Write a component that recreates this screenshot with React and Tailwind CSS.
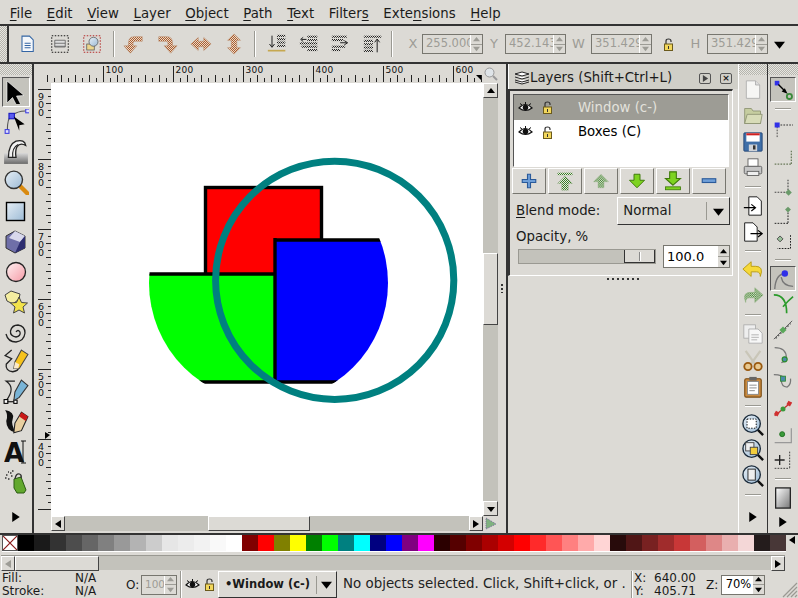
import React from "react";

const palette = ["#000000","#1a1a1a","#333333","#4d4d4d","#666666","#808080","#999999","#b3b3b3","#cccccc","#e6e6e6","#ececec","#f2f2f2","#f9f9f9","#ffffff","#800000","#ff0000","#808000","#ffff00","#008000","#00ff00","#008080","#00ffff","#000080","#0000ff","#800080","#ff00ff","#2b0000","#550000","#800000","#aa0000","#d40000","#ff0000","#ff2a2a","#ff5555","#ff8080","#ffaaaa","#ffd5d5","#280b0b","#501616","#782121","#a02c2c","#c83737","#d35f5f","#de8787","#e9afaf","#f4d7d7","#241c1c","#483737"];

const handleBg = "bg-[repeating-conic-gradient(#b5b4ad_0_25%,#e6e5e0_0_50%)] bg-[length:2px_2px]";

function S({ size = 24, children }) {
  return <svg width={size} height={size} viewBox="0 0 24 24" className="block">{children}</svg>;
}

function Defs() {
  return (
    <svg width="0" height="0" className="block h-0 w-0">
      <defs>
        <pattern id="hatchO" width="2.18" height="2.18" patternUnits="userSpaceOnUse">
          <rect width="2.18" height="2.18" fill="#ecdccc" />
          <rect width="1.09" height="1.09" fill="#a85a2c" />
          <rect x="1.09" y="1.09" width="1.09" height="1.09" fill="#a85a2c" />
        </pattern>
        <pattern id="hatchK" width="2.4" height="2.4" patternUnits="userSpaceOnUse">
          <rect width="1.2" height="1.2" fill="#222" />
          <rect x="1.2" y="1.2" width="1.2" height="1.2" fill="#222" />
        </pattern>
        <pattern id="hatchG" width="2.4" height="2.4" patternUnits="userSpaceOnUse">
          <rect width="2.4" height="2.4" fill="#e4ecdc" />
          <rect width="1.2" height="1.2" fill="#3a7a28" />
          <rect x="1.2" y="1.2" width="1.2" height="1.2" fill="#3a7a28" />
        </pattern>
        <linearGradient id="gBlue" x1="0" y1="0" x2="1" y2="1"><stop offset="0" stopColor="#e6eef5" /><stop offset="1" stopColor="#9dbbd6" /></linearGradient>
        <linearGradient id="gPink" x1="0" y1="0" x2="1" y2="1"><stop offset="0" stopColor="#fff2f2" /><stop offset="1" stopColor="#f59aa6" /></linearGradient>
        <linearGradient id="gGrey" x1="0" y1="0" x2="0" y2="1"><stop offset="0" stopColor="#d8d8d8" /><stop offset="1" stopColor="#6a6a6a" /></linearGradient>
        <linearGradient id="gWhite" x1="0" y1="0" x2="1" y2="1"><stop offset="0" stopColor="#ffffff" /><stop offset="1" stopColor="#777777" /></linearGradient>
      </defs>
    </svg>
  );
}

// little triangle used in scrollbars, spin boxes and overflow buttons
function Tri({ dir = "right", size = 8, color = "#000" }) {
  const pts = { right: "1,0 7,4 1,8", left: "7,0 1,4 7,8", up: "0,6 4,1 8,6", down: "0,2 8,2 4,7" }[dir];
  return <svg width={size} height={size} viewBox="0 0 8 8" className="block"><polygon points={pts} fill={color} /></svg>;
}

const Eye = () => (
  <svg width="15" height="12" viewBox="0 0 15 12" className="block">
    <path d="M1 6 Q7.5 -1 14 6 Q7.5 11 1 6Z" fill="#fff" stroke="#111" strokeWidth="1.2" />
    <circle cx="7.5" cy="5.5" r="2.8" fill="#111" />
    <path d="M2 1.5 L4 3 M7.5 0 V2 M13 1.5 L11 3" stroke="#111" />
  </svg>
);
const Lock = () => (
  <svg width="11" height="13" viewBox="0 0 11 13" className="block">
    <path d="M3 6 V3 Q3 1 5.5 1 Q8 1 8 3 V4" fill="none" stroke="#333" strokeWidth="1.2" />
    <rect x="1.5" y="6" width="8" height="6.5" fill="#f2d75c" stroke="#6b5a1c" />
    <rect x="5" y="8" width="1" height="3" fill="#333" />
  </svg>
);

// left tool box
const tools = [
  <S key="sel"><polygon points="3,1 3,23 8.5,17.5 13,26 16.5,24 12.5,16 20,15.5" fill="#000" stroke="#fff" strokeWidth="0.6" /></S>,
  <S key="node" size={26}><path d="M4 20 Q4 8 8 6 Q15 1 23 2" fill="none" stroke="#555" /><rect x="5.5" y="4" width="5" height="5" fill="#5a5af0" stroke="#1818c0" /><rect x="21" y="0" width="3.5" height="3.5" fill="#e0e0ff" stroke="#4040e0" /><rect x="2" y="19" width="3.5" height="3.5" fill="#e0e0ff" stroke="#4040e0" /><polygon points="10,7 20,14 15,15 15,20" fill="#000" /></S>,
  <S key="tweak" size={26}><rect x="1" y="13" width="22" height="10" fill="url(#gGrey)" /><path d="M5 17 Q5 5 12 2 Q20 0 21 6 Q16 3 13 7 Q11 11 12 17Z" fill="#f2f2f2" stroke="#222" strokeWidth="1.2" /><path d="M9 17 Q8 8 14 5" fill="none" stroke="#222" /></S>,
  <S key="zoom" size={26}><path d="M15 15 L23 23" stroke="#d98a10" strokeWidth="4" strokeLinecap="round" /><circle cx="10" cy="10" r="8" fill="url(#gBlue)" stroke="#333" strokeWidth="1.3" /></S>,
  <S key="rect"><rect x="2.5" y="2.5" width="18" height="18" fill="url(#gBlue)" stroke="#000" strokeWidth="1.4" /></S>,
  <S key="box"><polygon points="11,1 21,6 21,18 11,23 2,18 2,6" fill="#6f6fa8" stroke="#333" /><polygon points="11,1 21,6 16,12 5,8" fill="#d8d8ec" /><polygon points="16,12 21,6 21,18 11,23" fill="#2e2e70" /></S>,
  <S key="ell"><circle cx="12" cy="12" r="9.5" fill="url(#gPink)" stroke="#222" strokeWidth="1.3" /></S>,
  <S key="star"><polygon points="7,1 16,4 15,9 9,14 3,11 1,5" fill="#f4eda0" stroke="#444" /><polygon points="15,7 17.5,12.5 23.5,13 19,17 20.5,23 15,20 9.5,23 11,17 6.5,13 12.5,12.5" fill="#f2e24a" stroke="#444" /></S>,
  <S key="spiral"><path d="M12 12 Q14 9 16 12 Q17 16 12 17 Q6 16 6.500 11 Q8 5 14 5 Q21 6 21 13 Q20 21 12 22 Q4 22 2 14" fill="none" stroke="#222" strokeWidth="1.3" /></S>,
  <S key="pencil" size={26}><path d="M8 1 L2 6 L8 9 L3 14 Q2 20 9 21 Q15 20 14 17" fill="none" stroke="#222" strokeWidth="1.2" /><polygon points="17,1 23,5 15,18 10,18 11,12" fill="#f5c21c" stroke="#444" /><polygon points="11,12 15,14 14,18 10,18" fill="#fbe9c8" /></S>,
  <S key="pen" size={26}><path d="M3 20 Q12 8 3 2 H11" fill="none" stroke="#222" strokeWidth="1.1" /><rect x="1" y="19" width="3.500" height="3.500" fill="#fff" stroke="#000" /><rect x="10" y="19.500" width="3" height="3" fill="#fff" stroke="#000" /><path d="M4 21 H10" stroke="#000" /><polygon points="17,1 23,6 15,17 10,20 11,12" fill="#79b4d6" stroke="#333" /></S>,
  <S key="cal" size={26}><path d="M2 1 Q11 3 9 9 Q7 14 12 22 Q3 20 3 11 Q5 6 2 1Z" fill="#111" /><polygon points="17,3 23,7 17,20 10,22 11,13" fill="#e8cfa0" stroke="#222" /><polygon points="17,3 23,7 21,11 15,7" fill="#c81818" /></S>,
  <S key="text"><text x="0" y="22" fontFamily="DejaVu Sans" fontWeight="700" fontSize="26" fill="#111">A</text><path d="M19 1 V23 M17 1 H22 M17 23 H22" stroke="#111" fill="none" /></S>,
  <S key="spray"><polygon points="10,9 17,7 22,20 20,23 13,23 10,18" fill="#62a82e" stroke="#2a5a12" /><path d="M11 9 Q12 3 15.500 4 Q18 5 17 8" fill="none" stroke="#333" strokeWidth="1.3" /><path d="M6 3h1.500M2 5h1.500M7 6h1.500M1 8h1.500M4 9h1.500M8 1h1.500M4 2h1" stroke="#333" strokeWidth="1.500" /></S>,
];

// top command bar
const Page = () => (
  <S size={18}><path d="M4 1.500 H14 L19 6.500 V22 H4Z" fill="#f4f7fb" stroke="#3465a4" strokeWidth="1.4" /><path d="M7.500 11 H15.500 M7.500 14 H15.500 M7.500 17 H15.500" stroke="#3465a4" strokeWidth="1.5" /></S>
);
const SelAll = () => (
  <S size={18}><rect x="1" y="1" width="22" height="22" fill="none" stroke="#000" strokeWidth="1.2" strokeDasharray="2 2" /><path d="M5 7 H19 V16 H5Z M5 11 H19 M5 15 H19" fill="#ddd" stroke="#555" /></S>
);
const SelSame = () => (
  <S size={18}><rect x="1" y="1" width="22" height="22" fill="none" stroke="#b01818" strokeWidth="1.200" strokeDasharray="2 2" /><rect x="5" y="12" width="10" height="8" fill="#ecd58c" stroke="#555" /><circle cx="14" cy="9" r="6" fill="url(#gBlue)" stroke="#555" /></S>
);
const RotL = () => (
  <S size={22}><path d="M21 4 H12 Q6 4 6 11 V14 H1 L8 22 L15 14 H11 V11 Q11 9 13 9 H21Z" fill="url(#hatchO)" stroke="#b98a68" strokeWidth="0.6" /></S>
);
const RotR = () => (
  <S size={22}><path d="M3 4 H12 Q18 4 18 11 V14 H23 L16 22 L9 14 H13 V11 Q13 9 11 9 H3Z" fill="url(#hatchO)" stroke="#b98a68" strokeWidth="0.6" /></S>
);
const FlipH = () => (
  <S size={22}><path d="M1 12 L9 5 V9 H15 V5 L23 12 L15 19 V15 H9 V19Z" fill="url(#hatchO)" stroke="#b98a68" strokeWidth="0.6" /></S>
);
const FlipV = () => (
  <S size={22}><path d="M12 1 L19 8 H15 V16 H19 L12 23 L5 16 H9 V8 H5Z" fill="url(#hatchO)" stroke="#b98a68" strokeWidth="0.6" /></S>
);
const Bars = ({ rows }) => rows.map((r, i) => <rect key={i} x={r[0]} y={r[1]} width={r[2]} height="2.500" fill="url(#hatchK)" />);
const Raise = () => (
  <S size={20}><Bars rows={[[12,1,10],[12,5,10],[12,9,10],[12,13,10]]} /><path d="M6 2 V15 M3 12 L6 16 L9 12" fill="none" stroke="#222" strokeWidth="1.2" /><rect x="1" y="19" width="21" height="2" fill="#c6a850" /></S>
);
const Lower = () => (
  <S size={20}><Bars rows={[[10,2,12],[10,6,12],[1,10,21],[3,14,19],[10,18,12]]} /><path d="M9 6.500 H3 M5 4 L2 6.500 L5 9" fill="none" stroke="#222" strokeWidth="1.2" /></S>
);
const Bottom = () => (
  <S size={20}><Bars rows={[[1,2,18],[1,6,14],[1,14,16],[1,18,10]]} /><path d="M11 10.500 H19 M16 8 L20 10.500 L16 13" fill="none" stroke="#222" strokeWidth="1.2" /></S>
);
const Top = () => (
  <S size={20}><Bars rows={[[1,2,21],[1,7,11],[1,11,11],[1,15,11],[1,19,11]]} /><path d="M17 22 V7 M14 10 L17 6 L20 10" fill="none" stroke="#222" strokeWidth="1.2" /></S>
);

// right commands bar
const cmdTop = [
  <S key="new" size={20}><path d="M4 1 H15 L20 6 V22 H4Z" fill="#f6f6f4" stroke="#aaa" /><path d="M15 1 V6 H20" fill="#ddd" stroke="#aaa" /></S>,
  <S key="open" size={20}><path d="M2 21 V3 H10 L12 6 H21 V21Z" fill="#c6cda0" stroke="#8a9070" /><path d="M2 21 L5 10 H23 L21 21Z" fill="#d8dcb8" stroke="#8a9070" /></S>,
  <S key="save" size={20}><rect x="1" y="1" width="22" height="22" rx="1" fill="#3f6fa8" stroke="#1e3f6f" /><rect x="4" y="1.500" width="16" height="10" fill="#fff" /><rect x="4" y="1.500" width="16" height="2.500" fill="#d02020" /><rect x="7" y="15" width="10" height="8" fill="#cfd3d8" /><rect x="12" y="16" width="3" height="5" fill="#333" /></S>,
  <S key="print" size={20}><rect x="6" y="1" width="12" height="9" fill="#fff" stroke="#555" /><rect x="1.500" y="10" width="21" height="9" rx="1.500" fill="#c6c6c6" stroke="#555" /><rect x="5" y="16" width="14" height="5" fill="#eee" stroke="#555" /></S>,
];
const importIc = <S key="imp" size={20}><path d="M7 1 H17 L22 6 V23 H7Z" fill="#fff" stroke="#222" strokeWidth="1.200" /><path d="M1 14 H14 M10 10 L15 14 L10 18" fill="none" stroke="#000" strokeWidth="1.400" /></S>;
const exportIc = <S key="exp" size={20}><path d="M2 1 H12 L17 6 V23 H2Z" fill="#fff" stroke="#222" strokeWidth="1.200" /><path d="M9 14 H22 M18 10 L23 14 L18 18" fill="none" stroke="#000" strokeWidth="1.400" /></S>;
const undoIc = <S key="undo" size={22}><path d="M10 3 L1 11 L10 19 V14 H16 Q20 14 20 19 Q24 8 15 8 H10Z" fill="#f6d93a" stroke="#b89a10" /></S>;
const redoIc = <S key="redo" size={22}><path d="M14 3 L23 11 L14 19 V14 H8 Q4 14 4 19 Q0 8 9 8 H14Z" fill="url(#hatchG)" stroke="#8cae7a" strokeWidth="0.6" /></S>;
const copyIc = <S key="copy" size={20}><rect x="1" y="1" width="14" height="16" fill="#eee" stroke="#aaa" /><path d="M7 6 H18 L23 11 V23 H7Z" fill="#f7f7f7" stroke="#aaa" /><path d="M10 13 H19 M10 16 H19 M10 19 H17" stroke="#aaa" /></S>;
const cutIc = <S key="cut" size={22}><path d="M4 1 L14 15 M20 1 L10 15" stroke="#c9c6b8" strokeWidth="2.400" /><circle cx="6.500" cy="18" r="4" fill="#e8c890" stroke="#9a5a10" strokeWidth="2" /><circle cx="17.500" cy="18" r="4" fill="#e8c890" stroke="#9a5a10" strokeWidth="2" /></S>;
const pasteIc = <S key="paste" size={22}><rect x="3" y="3" width="18" height="20" rx="1.500" fill="#c98a40" stroke="#7a4a10" strokeWidth="1.200" /><rect x="6" y="6" width="12" height="14" fill="#fff" stroke="#888" /><rect x="8" y="1" width="8" height="4" fill="#666" /><path d="M8 10 H16 M8 13 H16 M8 16 H14" stroke="#888" /></S>;
const ZoomC = ({ children }) => (
  <S size={22}><path d="M17 17 L23 23" stroke="#111" strokeWidth="2.600" /><circle cx="10.500" cy="10.500" r="9.500" fill="url(#gBlue)" stroke="#1a2a3a" strokeWidth="1.500" />{children}</S>
);
const zoomSel = <ZoomC key="z1"><rect x="5.500" y="5.500" width="10" height="10" fill="#fff" stroke="#000" strokeDasharray="1.500 1.500" /></ZoomC>;
const zoomDraw = <ZoomC key="z2"><rect x="4" y="4" width="9" height="9" fill="#eee" stroke="#444" /><rect x="9" y="9" width="8" height="8" fill="#f2cd3c" stroke="#444" /></ZoomC>;
const zoomPage = <ZoomC key="z3"><rect x="6.500" y="4.500" width="8" height="12" fill="#eee" stroke="#222" /></ZoomC>;

// snapping bar
const snap = {
  main: <S key="s1" size={22}><rect x="3" y="2" width="5" height="5" fill="#3030e8" /><circle cx="19" cy="19" r="2.800" fill="none" stroke="#3a8a3a" strokeWidth="2" /><path d="M7 6 L14 13" stroke="#000" strokeWidth="1.500" /><polygon points="17,16 10.500,13.500 14,10" fill="#000" /></S>,
  a: <S key="s2" size={20}><path d="M5 8 V22" stroke="#333" strokeDasharray="2 1.500" /><path d="M9 6 H24" stroke="#333" strokeDasharray="2 1.500" strokeWidth="1.200" /><rect x="2" y="3" width="6" height="6" fill="#3030e8" /></S>,
  b: <S key="s3" size={20}><path d="M22 2 V18 M2 18 H22" stroke="#6a7a5a" strokeWidth="1.500" strokeDasharray="2 1.500" /></S>,
  c: <S key="s4" size={20}><path d="M18 2 V17 M2 17 H18" stroke="#444" strokeWidth="1.300" strokeDasharray="2 1.500" /><rect x="16" y="14.500" width="5.500" height="5.500" fill="#6a9a6a" transform="rotate(45 18.700 17.200)" /></S>,
  d: <S key="s5" size={20}><path d="M18 9 V22 M2 22 H18" stroke="#222" strokeWidth="1.200" strokeDasharray="2 1.500" /><rect x="15.500" y="3" width="5" height="5" fill="#6a9a6a" transform="rotate(45 18 5.500)" /></S>,
  e: <S key="s6" size={20}><path d="M21 5 V21 H5" fill="none" stroke="#222" strokeWidth="1.200" strokeDasharray="2 1.500" /><rect x="6" y="7" width="5" height="5" fill="#9ac09a" stroke="#444" transform="rotate(45 8.500 9.500)" /></S>,
  cusp: <S key="s7" size={22}><path d="M3 23 Q4 6 15 6 M10 10 Q12 20 23 20" fill="none" stroke="#777" strokeWidth="1.500" /><circle cx="14" cy="6" r="3.500" fill="#3030e8" /></S>,
  green: <S key="s8" size={22}><path d="M2 2 Q16 2 16 22 M12 15 Q18 8 23 4" fill="none" stroke="#2a9a2a" strokeWidth="1.800" /></S>,
  mid: <S key="s9" size={20}><path d="M1 23 L23 1" stroke="#444" /><path d="M3 22 L21 4" stroke="#666" strokeDasharray="2 2" strokeWidth="2" /><rect x="9" y="9" width="6" height="6" fill="#5aa85a" transform="rotate(45 12 12)" /></S>,
  curve1: <S key="s10" size={20}><path d="M2 2 Q16 2 16 14 Q16 18 10 20" fill="none" stroke="#777" strokeWidth="1.500" /><circle cx="14" cy="16" r="3" fill="#4a8aaa" stroke="#2a8a2a" strokeWidth="1.400" /></S>,
  curve2: <S key="s11" size={20}><path d="M1 3 Q12 3 14 8 M10 9 Q10 18 17 18 Q22 15 21 8" fill="none" stroke="#777" strokeWidth="1.500" /><rect x="9" y="5" width="6" height="6" fill="#4a8aaa" stroke="#2a8a2a" /></S>,
  red: <S key="s12" size={20}><path d="M2 20 L22 4" stroke="#c03030" strokeWidth="1.500" /><rect x="2" y="15" width="5" height="5" fill="#d03030" transform="rotate(30 4.500 17.500)" /><rect x="17" y="3" width="5" height="5" fill="#d03030" transform="rotate(30 19.500 5.500)" /><circle cx="12" cy="12" r="3" fill="#3a9a3a" /></S>,
  box: <S key="s13" size={20}><path d="M22 4 V21 H2" fill="none" stroke="#999" strokeWidth="1.500" /><circle cx="11" cy="11" r="3" fill="#3a9a3a" stroke="#1a6a1a" /></S>,
  plus: <S key="s14" size={20}><path d="M8 6 V18 M2 12 H14" stroke="#222" strokeWidth="1.600" /><path d="M20 2 V22 M2 22 H20" stroke="#222" strokeDasharray="2 1.500" fill="none" /></S>,
  page: <S key="s15" size={22}><rect x="4" y="1" width="16" height="22" fill="url(#gWhite)" stroke="#222" strokeWidth="1.400" /></S>,
};

function VSep() {
  return <div className="mx-auto h-[2px] w-[16px] border-t border-[#9a9992] bg-white" />;
}

function Cell({ h, active, children }) {
  return (
    <div className={`flex shrink-0 items-center justify-center ${active ? "mx-[2px] border border-t-[#555] border-l-[#555] border-r-white border-b-white bg-[#c4c3bc]" : ""}`} style={{ height: h }}>
      {children}
    </div>
  );
}

function Spin({ w, text, off, h = "h-[20px]", center, textClass = "text-[13px]" }) {
  return (
    <div className={`flex shrink-0 border border-[#77766f] ${h} ${off ? "bg-[#dcdad5] text-[#9d9c96]" : "bg-white text-black"}`} style={{ width: w }}>
      <div className={`flex min-w-0 flex-1 items-center overflow-hidden whitespace-nowrap pl-[3px] ${textClass} ${center ? "justify-center" : ""}`}>{text}</div>
      <div className="flex w-[12px] shrink-0 flex-col border-l border-white bg-[#dcdad5]">
        <div className="flex flex-1 items-center justify-center border-b border-[#9d9c96]"><Tri dir="up" size={7} color={off ? "#9d9c96" : "#000"} /></div>
        <div className="flex flex-1 items-center justify-center"><Tri dir="down" size={7} color={off ? "#9d9c96" : "#000"} /></div>
      </div>
    </div>
  );
}

function Field({ label, w, value }) {
  return (
    <>
      <div className="shrink-0 text-center text-[13px] text-[#9d9c96]" style={{ width: w }}>{label}</div>
      <Spin w={61} text={value} off textClass="text-[11.500px]" />
    </>
  );
}

function TopCell({ w, children }) {
  return <div className="flex shrink-0 items-center justify-center" style={{ width: w }}>{children}</div>;
}

function BarSep({ className }) {
  return <div className={`h-[26px] w-[2px] shrink-0 border-l border-[#9a9992] bg-white ${className}`} />;
}

function ScrollBtn({ dir, off, className = "" }) {
  return (
    <div className={`flex h-[15px] w-[14px] shrink-0 items-center justify-center border border-t-white border-l-white border-r-[#444] border-b-[#444] bg-[#dcdad5] ${className}`}>
      <Tri dir={dir} size={8} color={off ? "#9d9c96" : "#000"} />
    </div>
  );
}

function LayerBtn({ children, last }) {
  return (
    <div className={`flex h-[26px] w-[33.500px] items-center justify-center border border-t-white border-l-white border-r-[#77766f] border-b-[#77766f] bg-[#dcdad5] ${last ? "" : "mr-[2.500px]"}`}>
      {children}
    </div>
  );
}

function TopRuler() {
  const ticks = [];
  for (let x = 47; x < 482; x += 7) {
    const major = (x - 103) % 70 === 0;
    const mid = (x - 103) % 14 === 0;
    ticks.push(<path key={x} d={`M${x - 33.5} ${major ? 2 : mid ? 11 : 14} V18`} stroke="#222" strokeWidth="1" />);
  }
  return (
    <svg width="449" height="19" viewBox="0 0 449 19" className="block">
      {ticks}
      {[100, 200, 300, 400, 500, 600].map((n, i) => (
        <text key={n} x={71.5 + i * 70} y="8.500" fontSize="9" fontFamily="DejaVu Sans" letterSpacing="0.300" fill="#111">{n}</text>
      ))}
      <polygon points="442,11 447,11 447,16" fill="#000" />
    </svg>
  );
}

function SideRuler() {
  const ticks = [];
  for (let y = 6; y < 433; y += 7) {
    const major = (y - 6) % 70 === 0;
    const mid = (y - 6) % 14 === 0;
    ticks.push(<path key={y} d={`M${major ? 4 : mid ? 12 : 14} ${y + 0.5} H17`} stroke="#222" strokeWidth="1" />);
  }
  return (
    <svg width="17" height="433" viewBox="0 0 17 433" className="block">
      {ticks}
      {["900", "800", "700", "600", "500", "400"].map((n, i) =>
        n.split("").map((c, j) => (
          <text key={n + j} x="4" y={16.500 + i * 70 + j * 8} fontSize="9.500" fontFamily="DejaVu Sans" fill="#111">{c}</text>
        ))
      )}
      <polygon points="11,349 16,352 11,356" fill="#000" />
    </svg>
  );
}

function Drawing() {
  return (
    <svg width="432" height="433" viewBox="51 83 432 433" className="block bg-white">
      <defs>
        <clipPath id="arc"><circle cx="268.500" cy="283" r="119.500" /></clipPath>
      </defs>
      <rect x="205.500" y="187.500" width="116" height="88" fill="#ff0000" stroke="#000" strokeWidth="3.400" />
      <g clipPath="url(#arc)">
        <rect x="140" y="274" width="135" height="108" fill="#00ff00" />
        <rect x="275" y="240" width="120" height="142" fill="#0000ff" />
        <path d="M140 274 H275 M275 382 H190 M275 382 H350 M275 240 H395" stroke="#000" strokeWidth="3.400" fill="none" />
        <path d="M275 238 V384" stroke="#000" strokeWidth="3.400" />
      </g>
      <circle cx="334.700" cy="280.300" r="119.100" fill="none" stroke="#008080" strokeWidth="7" />
    </svg>
  );
}

export default function App() {
  return (
    <div className="flex h-[598px] w-[798px] flex-col overflow-hidden bg-[#dcdad5] font-['DejaVu_Sans',sans-serif] text-[13.300px] text-[#1a1a1a]">
      <Defs />
      {/* Menu */}
      <div className="flex h-[26px] shrink-0 items-center border-b-2 border-[#333] pl-[2.500px] pt-[3px]">
        {[["F", "ile"], ["E", "dit"], ["V", "iew"], ["L", "ayer"], ["O", "bject"], ["P", "ath"], ["T", "ext"]].map(([u, r]) => (
          <span key={r} className="px-[7.350px]"><span className="underline underline-offset-2">{u}</span>{r}</span>
        ))}
        <span className="px-[7.350px]">Filter<span className="underline underline-offset-2">s</span></span>
        <span className="px-[7.350px]">Exte<span className="underline underline-offset-2">n</span>sions</span>
        <span className="px-[7.350px]"><span className="underline underline-offset-2">H</span>elp</span>
      </div>

      {/* Commands bar */}
      <div className="flex h-[38px] shrink-0 items-center border-b-2 border-[#333]">
        <div className={`h-full w-[9px] shrink-0 border-r-2 border-[#333] ${handleBg}`} />
        <div className="w-[3px] shrink-0" />
        <TopCell w={32}><Page /></TopCell>
        <TopCell w={32}><SelAll /></TopCell>
        <TopCell w={32}><SelSame /></TopCell>
        <BarSep className="ml-[5px]" />
        <div className="w-[2px] shrink-0" />
        <TopCell w={33.5}><RotL /></TopCell>
        <TopCell w={33.5}><RotR /></TopCell>
        <TopCell w={33.5}><FlipH /></TopCell>
        <TopCell w={33.5}><FlipV /></TopCell>
        <BarSep className="ml-[3px]" />
        <div className="w-[5px] shrink-0" />
        <TopCell w={32}><Raise /></TopCell>
        <TopCell w={32}><Lower /></TopCell>
        <TopCell w={32}><Bottom /></TopCell>
        <TopCell w={32}><Top /></TopCell>
        <BarSep className="ml-[2px]" />
        <div className="w-[11px] shrink-0" />
        <Field label="X" w={18} value="255.000" />
        <Field label="Y" w={22} value="452.143" />
        <Field label="W" w={25} value="351.429" />
        <TopCell w={32}><Lock /></TopCell>
        <Field label="H" w={23} value="351.429" />
        <TopCell w={22}><Tri dir="down" size={11} /></TopCell>
      </div>

      {/* Work area */}
      <div className="flex h-[469px] shrink-0">
        {/* Tool box */}
        <div className="flex w-[34px] shrink-0 flex-col border-r-2 border-[#333]">
          <div className={`h-[11px] shrink-0 ${handleBg}`} />
          <div className="h-[2px] shrink-0" />
          {tools.map((t, i) => <Cell key={i} h={30} active={i === 0}>{t}</Cell>)}
          <div className="flex flex-1 items-center justify-center pt-[4px]"><Tri dir="right" size={10} /></div>
        </div>

        {/* Canvas table */}
        <div className="flex w-[472px] shrink-0 flex-col">
          <div className="flex h-[19px] shrink-0">
            <TopRuler />
            <div className="flex w-[15px] shrink-0 items-center justify-center">
              <svg width="14" height="14" viewBox="0 0 14 14" className="block"><circle cx="5.500" cy="5.500" r="4.500" fill="#dfe4e8" stroke="#999" /><path d="M9 9 L13 13" stroke="#999" strokeWidth="2" /></svg>
            </div>
          </div>
          <div className="flex h-[433px] shrink-0">
            <SideRuler />
            <Drawing />
            <div className="flex w-[15px] shrink-0 flex-col bg-[#c3c2bb]">
              <ScrollBtn dir="up" className="!w-full" />
              <div className="mt-[155px] h-[72px] border border-t-white border-l-white border-r-[#444] border-b-[#444] bg-[#dcdad5]" />
              <div className="flex-1" />
              <ScrollBtn dir="down" className="!w-full" />
            </div>
            <div className="w-[8px] shrink-0 pt-[201px] pl-[3px]">
              <div className="h-[9px] w-[2px] bg-[repeating-linear-gradient(180deg,#333_0_2px,transparent_2px_4px)]" />
            </div>
          </div>
          <div className="flex h-[15px] shrink-0">
            <div className="w-[17px] shrink-0" />
            <div className="flex w-[432px] shrink-0 bg-[#c3c2bb]">
              <ScrollBtn dir="left" />
              <div className="ml-[143px] h-[15px] w-[102px] border border-t-white border-l-white border-r-[#444] border-b-[#444] bg-[#dcdad5]" />
              <div className="flex-1" />
              <ScrollBtn dir="right" />
            </div>
            <div className="flex w-[15px] shrink-0 items-center justify-center">
              <svg width="13" height="13" viewBox="0 0 13 13" className="block"><polygon points="2,1 12,7 2,12" fill="#7fb27f" stroke="#7a6a9a" strokeDasharray="1 1" /></svg>
            </div>
          </div>
        </div>

        {/* Layers dock */}
        <div className="flex w-[232px] shrink-0 flex-col border-l-2 border-[#333]">
          <div className="flex h-[25px] shrink-0 items-center border-l border-white bg-[#d0cfc8] pt-[3px] pl-[5px]">
            <svg width="16" height="14" viewBox="0 0 16 14" className="block shrink-0"><path d="M1 3 L8 1 L15 3 L8 5Z M1 6 L8 8 L15 6 M1 9 L8 11 L15 9 M1 11 L8 13 L15 11" fill="#fff" stroke="#222" /></svg>
            <span className="whitespace-nowrap">Layers (Shift+Ctrl+L)</span>
            <div className="ml-auto flex items-center gap-[9px] pr-[6px]">
              <div className="flex h-[11px] w-[12px] items-center justify-center rounded-[2px] border border-[#555]"><Tri dir="right" size={7} color="#444" /></div>
              <div className="flex h-[11px] w-[12px] items-center justify-center rounded-[2px] border border-[#555] text-[9px] font-bold leading-none">×</div>
            </div>
          </div>
          <div className="flex h-[187px] w-[225px] shrink-0 flex-col border border-t-2 border-l-2 border-t-[#333] border-l-[#333] border-r-white border-b-white px-[3px]">
            <div className="mt-[3px] h-[73px] shrink-0 border border-t-[#555] border-l-[#555] border-r-white border-b-white bg-white">
              <div className="flex h-[25px] items-center bg-[#9d9c95] text-[#e3e2dc]">
                <div className="ml-[4px] w-[15px]"><Eye /></div>
                <div className="ml-[9px] w-[11px]"><Lock /></div>
                <span className="ml-[25px]">Window (c-)</span>
              </div>
              <div className="flex h-[24px] items-center text-black">
                <div className="ml-[4px] w-[15px]"><Eye /></div>
                <div className="ml-[9px] w-[11px]"><Lock /></div>
                <span className="ml-[25px]">Boxes (C)</span>
              </div>
            </div>
            <div className="mt-[1px] -ml-[1px] flex shrink-0">
              <LayerBtn><S size={18}><path d="M10 3 H14 V10 H21 V14 H14 V21 H10 V14 H3 V10 H10Z" fill="#6f9fd8" stroke="#2a5a9a" strokeWidth="1.500" /></S></LayerBtn>
              <LayerBtn><S size={20}><rect x="3" y="2" width="18" height="3" fill="url(#hatchG)" /><path d="M12 6 L21 15 H16 V23 H8 V15 H3Z" fill="url(#hatchG)" stroke="#9ab08a" strokeWidth="0.500" /></S></LayerBtn>
              <LayerBtn><S size={18}><path d="M12 3 L22 13 H16 V21 H8 V13 H2Z" fill="url(#hatchG)" stroke="#9ab08a" strokeWidth="0.500" /></S></LayerBtn>
              <LayerBtn><S size={18}><path d="M12 21 L22 11 H16 V3 H8 V11 H2Z" fill="#7ed321" stroke="#3f7a0a" strokeWidth="1.300" /></S></LayerBtn>
              <LayerBtn><S size={20}><path d="M12 17 L21 9 H16 V1 H8 V9 H3Z" fill="#7ed321" stroke="#3f7a0a" strokeWidth="1.300" /><rect x="3" y="19" width="18" height="3.500" fill="#7ed321" stroke="#3f7a0a" /></S></LayerBtn>
              <LayerBtn last><S size={18}><rect x="3" y="9" width="18" height="5" fill="#6f9fd8" stroke="#2a5a9a" strokeWidth="1.500" /></S></LayerBtn>
            </div>
            <div className="mt-[3px] flex h-[28px] shrink-0 items-center pl-[3px]">
              <span className="shrink-0"><span className="underline underline-offset-2">B</span>lend mode:</span>
              <div className="ml-[17px] flex h-[28px] w-[113px] shrink-0 items-center border border-t-white border-l-white border-r-[#333] border-b-[#333] pl-[5px]">
                <span>Normal</span>
                <div className="ml-auto flex h-[18px] w-[23px] items-center justify-center border-l border-[#9a9992]"><Tri dir="down" size={11} /></div>
              </div>
            </div>
            <div className="mt-[3px] shrink-0 pl-[3px] leading-[18px]">Opacity, %</div>
            <div className="flex shrink-0 items-start pl-[5px]">
              <div className="mt-[3px] flex h-[15px] w-[138px] shrink-0 justify-end border border-[#9a9992] bg-[#c3c2bb]">
                <div className="flex h-full w-[31px] items-center justify-center border-r border-b border-l border-[#333] bg-[#dcdad5]"><div className="h-[9px] w-[2px] border-l border-[#888] bg-white" /></div>
              </div>
              <div className="ml-[7px] -mt-[1px]"><Spin w={67} text="100.0" h="h-[23px]" /></div>
            </div>
          </div>
          <div className="flex h-[6px] shrink-0 items-center justify-center">
            <div className="h-[2px] w-[33px] bg-[repeating-linear-gradient(90deg,#333_0_2px,transparent_2px_5px)]" />
          </div>
          <div className="flex-1" />
        </div>

        {/* Commands column */}
        <div className="flex w-[30px] shrink-0 flex-col border-r border-[#333] border-l border-l-white">
          <div className={`h-[11px] shrink-0 ${handleBg}`} />
          <div className="h-[2px] shrink-0" />
          {cmdTop.map((c, i) => <Cell key={i} h={26}>{c}</Cell>)}
          <Cell h={12}><VSep /></Cell>
          <Cell h={26}>{importIc}</Cell>
          <Cell h={26}>{exportIc}</Cell>
          <Cell h={12}><VSep /></Cell>
          <Cell h={26}>{undoIc}</Cell>
          <Cell h={26}>{redoIc}</Cell>
          <Cell h={12}><VSep /></Cell>
          <Cell h={26}>{copyIc}</Cell>
          <Cell h={27}>{cutIc}</Cell>
          <Cell h={26}>{pasteIc}</Cell>
          <Cell h={12}><VSep /></Cell>
          <Cell h={25}>{zoomSel}</Cell>
          <Cell h={26}>{zoomDraw}</Cell>
          <Cell h={26}>{zoomPage}</Cell>
          <Cell h={12}><VSep /></Cell>
          <div className="flex flex-1 items-center justify-center"><Tri dir="right" size={10} /></div>
        </div>

        {/* Snap column */}
        <div className="flex min-w-0 flex-1 flex-col">
          <div className={`h-[11px] shrink-0 ${handleBg}`} />
          <div className="h-[2px] shrink-0" />
          <Cell h={25} active>{snap.main}</Cell>
          <Cell h={14}><VSep /></Cell>
          <Cell h={28}>{snap.a}</Cell>
          <Cell h={29}>{snap.b}</Cell>
          <Cell h={29}>{snap.c}</Cell>
          <Cell h={26}>{snap.d}</Cell>
          <Cell h={26}>{snap.e}</Cell>
          <Cell h={12}><VSep /></Cell>
          <Cell h={25} active>{snap.cusp}</Cell>
          <Cell h={26}>{snap.green}</Cell>
          <Cell h={26}>{snap.mid}</Cell>
          <Cell h={26}>{snap.curve1}</Cell>
          <Cell h={26}>{snap.curve2}</Cell>
          <Cell h={27}>{snap.red}</Cell>
          <Cell h={25}>{snap.box}</Cell>
          <Cell h={26}>{snap.plus}</Cell>
          <Cell h={12}><VSep /></Cell>
          <Cell h={26}>{snap.page}</Cell>
          <div className="flex flex-1 items-center justify-center"><Tri dir="right" size={10} /></div>
        </div>
      </div>

      {/* Palette */}
      <div className="flex h-[22px] shrink-0 items-start border-t-2 border-[#333]">
        <div className="ml-[2px] flex h-[17px] border-b border-white">
          <svg width="16" height="16" viewBox="0 0 16 16" className="block bg-white"><path d="M0 0 L16 16 M16 0 L0 16" stroke="#8a1a1a" strokeWidth="1.200" /><rect x="0.500" y="0.500" width="15" height="15" fill="none" stroke="#555" /></svg>
          {palette.map((c, i) => <div key={i} className="h-[16px] w-[16px] shrink-0" style={{ background: c }} />)}
        </div>
        <div className="flex flex-1 justify-center pt-[1px]"><Tri dir="left" size={8} /></div>
      </div>

      {/* Palette scrollbar */}
      <div className="flex h-[16px] shrink-0 pr-[13px] pl-[1px]">
        <div className="flex h-[15px] flex-1 border-t border-[#9a9992] bg-[#c3c2bb]">
          <ScrollBtn dir="left" off />
          <div className="h-[15px] w-[84px] border border-t-white border-l-white border-r-[#444] border-b-[#444] bg-[#dcdad5]" />
          <div className="flex-1" />
          <ScrollBtn dir="right" />
        </div>
      </div>

      {/* Status bar */}
      <div className="flex min-h-0 flex-1 items-center text-[13px]">
        <div className="w-[120px] shrink-0 pl-[2px] text-[12px] leading-[13px]">
          <div className="flex"><span className="w-[73px]">Fill:</span><span>N/A</span></div>
          <div className="flex"><span className="w-[73px]">Stroke:</span><span>N/A</span></div>
        </div>
        <span className="ml-[6px] w-[15px] shrink-0 text-[12px]">O:</span>
        <Spin w={36} text="100" off textClass="text-[10.500px]" />
        <div className="ml-[3px] h-full w-[2px] shrink-0 border-l border-[#9a9992] bg-white" />
        <div className="ml-[3px] w-[15px] shrink-0"><Eye /></div>
        <div className="ml-[4px] w-[11px] shrink-0"><Lock /></div>
        <div className="ml-[3px] flex h-full w-[119px] shrink-0 items-center border border-t-white border-l-white border-r-[#333] border-b-[#333] pl-[6px]">
          <span className="whitespace-nowrap text-[11.500px] font-bold">•Window (c-)</span>
          <div className="ml-auto flex h-[18px] w-[20px] items-center justify-center border-l border-[#9a9992]"><Tri dir="down" size={11} /></div>
        </div>
        <div className="ml-[6px] w-[288px] shrink-0 overflow-hidden whitespace-nowrap text-[13.400px] text-[#222]">No objects selected. Click, Shift+click, or .</div>
        <div className="h-full w-[2px] shrink-0 border-l border-[#9a9992] bg-white" />
        <div className="ml-[1px] w-[72px] shrink-0 text-[12px] leading-[13px]">
          <div className="flex"><span className="w-[20px]">X:</span><span>640.00</span></div>
          <div className="flex"><span className="w-[20px]">Y:</span><span>405.71</span></div>
        </div>
        <span className="w-[15px] shrink-0 text-[12px]">Z:</span>
        <Spin w={44} text="70%" center textClass="text-[11.500px]" />
        <svg width="18" height="18" viewBox="0 0 18 18" className="mt-auto ml-auto block shrink-0"><path d="M17 3 L3 17 M17 7 L7 17 M17 11 L11 17 M17 15 L15 17" stroke="#9a9992" strokeWidth="1.200" /></svg>
      </div>
    </div>
  );
}
